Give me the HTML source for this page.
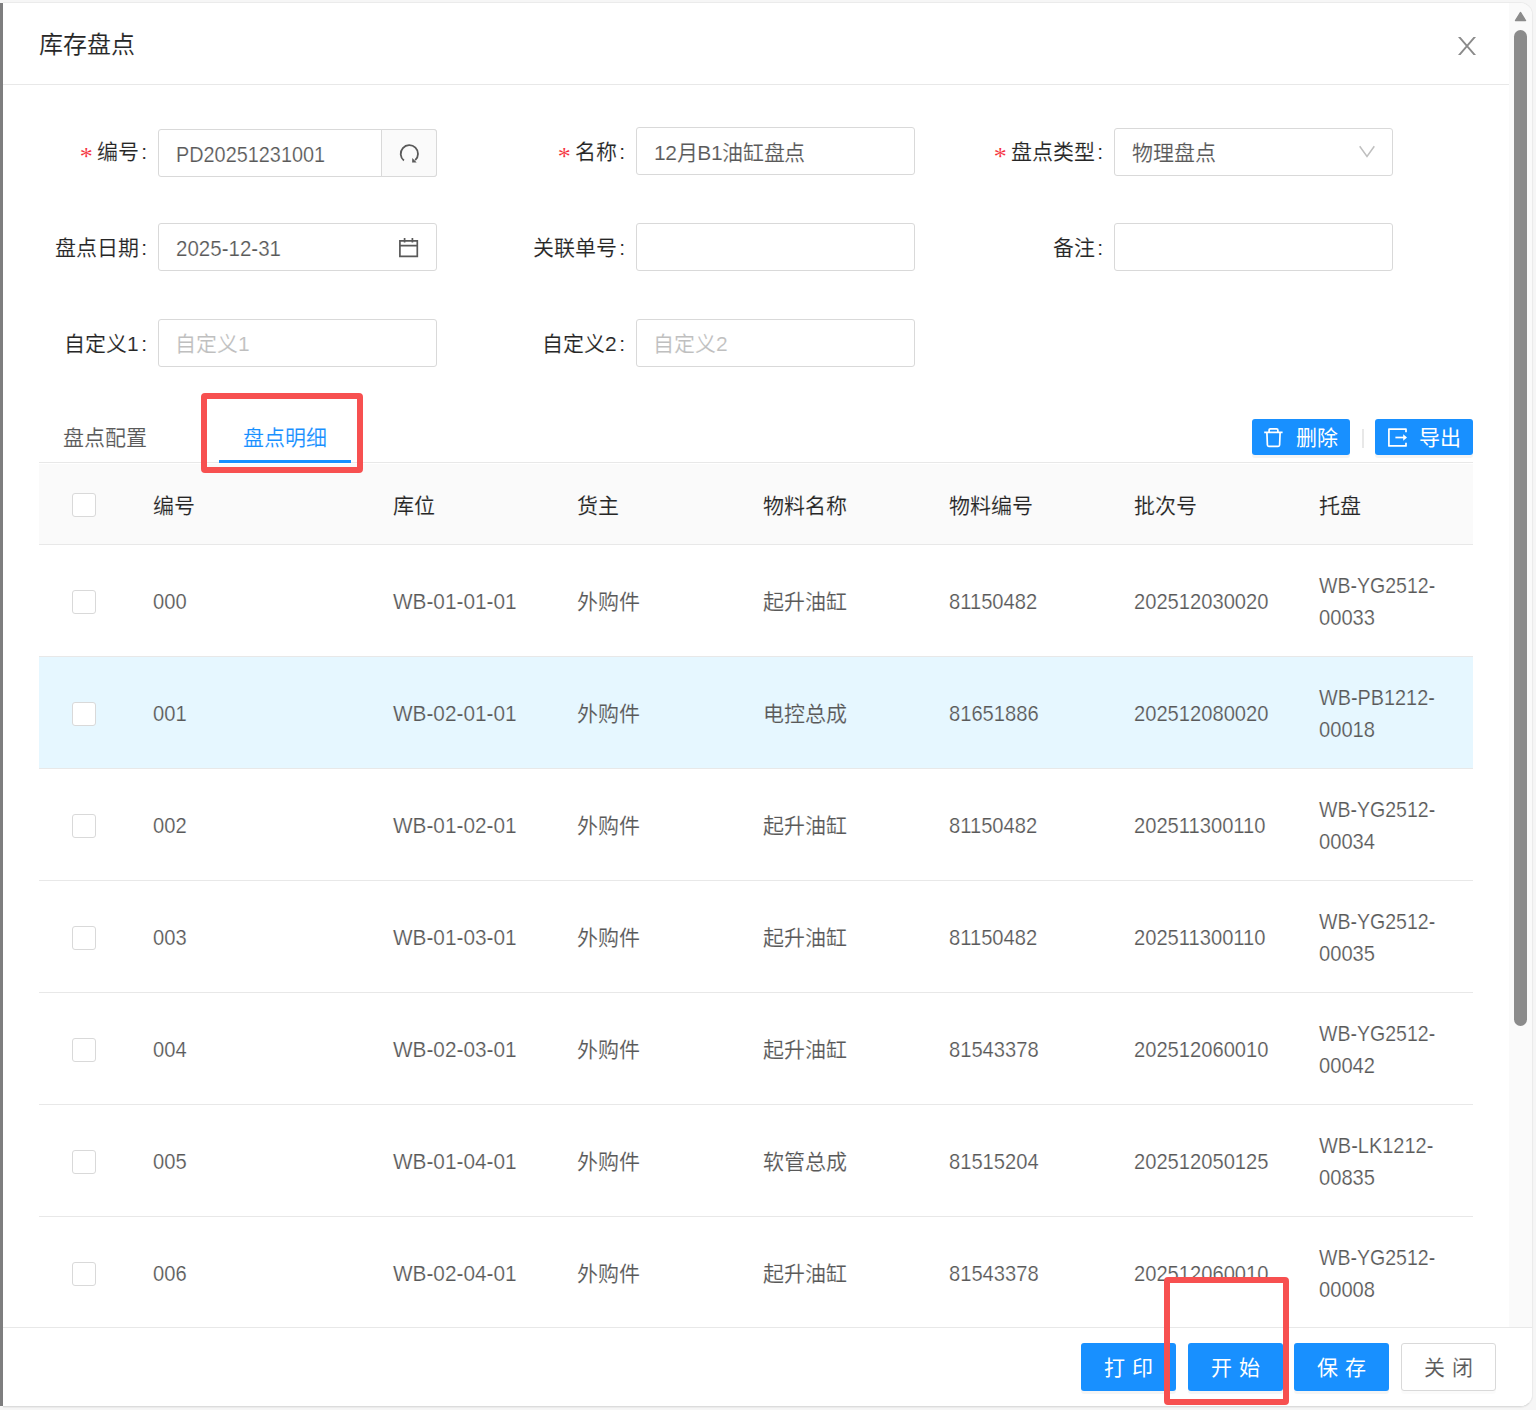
<!DOCTYPE html>
<html lang="zh-CN">
<head>
<meta charset="utf-8">
<title>库存盘点</title>
<style>
*{box-sizing:border-box;margin:0;padding:0}
html,body{width:1536px;height:1410px;overflow:hidden;background:#f6f6f6}
body{position:relative;font-family:"Liberation Sans",sans-serif;font-size:21px;line-height:31.5px;color:#595959;-webkit-text-stroke:.12px #fff}
.abs{position:absolute}
.strip{left:0;top:3px;width:3px;height:1403px;background:#7e7e7f}
.modal{left:3px;top:2px;width:1530px;height:1405px;background:#fff;border:1px solid #ebebeb;border-bottom-color:#dcdcdc;border-left:0;border-radius:0 13px 13px 0;box-shadow:0 1px 1px rgba(0,0,0,.05)}
.hline{background:#e8e8e8;height:1px}
.title{left:39px;top:28px;height:33px;line-height:33px;font-size:24px;color:#262626;white-space:nowrap}
.track{left:1509px;top:3px;width:23px;height:1324px;background:#fafafa;border-radius:0 12px 0 0}
.thumb{left:1514px;top:30px;width:13px;height:996px;border-radius:6.5px;background:#8b8b8b}
/* form */
.lbl{height:48px;line-height:50px;text-align:right;color:#262626;white-space:nowrap;width:150px}
.lbl i{font-style:normal;color:#f5222d;font-size:26px;line-height:1;margin-right:4px;font-family:"Liberation Serif",serif;position:relative;top:5.5px}
.lbl b{font-weight:normal;margin:0 11px 0 2.5px}
.inp{width:279px;height:48px;border:1px solid #d9d9d9;border-radius:3px;background:#fff;line-height:48px;padding-left:17px;white-space:nowrap;overflow:hidden}
.ph{color:#bfbfbf;padding-left:16px}
/* tabs */
.tab{top:421.5px;height:31.5px;line-height:31.5px;white-space:nowrap}
.sbtn{-webkit-text-stroke:0 #1890ff;top:419px;width:98px;height:36px;border-radius:3px;background:#1890ff;box-shadow:0 3px 0 rgba(0,0,0,.045);color:#fff;line-height:38px;white-space:nowrap}
/* table */
.th{-webkit-text-stroke-color:#fafafa;top:490px;height:31.5px;line-height:31.5px;color:#262626;white-space:nowrap}
.row{left:39px;width:1434px;height:112px;border-bottom:1px solid #e8e8e8}
.cb{left:33px;top:45px;width:24px;height:24px;border:1px solid #d9d9d9;border-radius:3px;background:#fff}
.c{top:40.5px;height:31.5px;line-height:31.5px;white-space:nowrap}
.c2{top:24.5px;line-height:31.5px;white-space:nowrap}
.n,.w,.y,.p,.d{font-size:22px;transform-origin:0 50%;display:inline-block;-webkit-text-stroke-width:.2px}
.inp .p,.inp .d{position:relative;top:1px}
.n{transform:scaleX(.916)}.w{transform:scaleX(.944)}.y{transform:scaleX(.888)}.p{transform:scaleX(.9025)}.d{transform:scaleX(.933)}
/* footer */
.btn{top:1343px;width:94.5px;height:48px;border-radius:3px;line-height:49px;text-align:center;white-space:nowrap;letter-spacing:7px;padding-left:7px;box-shadow:0 3px 0 rgba(0,0,0,.04)}
.pri{background:#1890ff;color:#fff;-webkit-text-stroke:0 #1890ff}
.dft{background:#fff;color:#595959;border:1px solid #d9d9d9;line-height:47px;box-shadow:0 3px 0 rgba(0,0,0,.015)}
.red{border:6px solid #f75050;border-radius:4px}
</style>
</head>
<body>
<div class="abs strip"></div>
<div class="abs modal"></div>

<!-- header -->
<div class="abs title">库存盘点</div>
<svg class="abs" style="left:1457px;top:36px" width="20" height="20" viewBox="0 0 20 20"><path d="M1 1 H3.5 L19 19 H16.5 Z M16.5 1 H19 L3.5 19 H1 Z" fill="#8a8a8a"/></svg>
<div class="abs hline" style="left:3px;top:84px;width:1506px"></div>

<!-- scrollbar -->
<div class="abs track"></div>
<svg class="abs" style="left:1514px;top:11px" width="14" height="11" viewBox="0 0 14 11"><path d="M1.4 9.6 L6.5 1.4 L11.6 9.6 Z" fill="#8b8b8b" stroke="#8b8b8b" stroke-width="1.2" stroke-linejoin="round"/></svg>
<div class="abs thumb"></div>

<!-- form row 1 -->
<div class="abs lbl" style="left:8px;top:127px"><i>*</i>编号<b>:</b></div>
<div class="abs inp" style="left:158px;top:129px"><span class="p">PD20251231001</span></div>
<div class="abs" style="left:381px;top:129px;width:56px;height:48px;background:#fafafa;border:1px solid #d9d9d9;border-radius:0 3px 3px 0"></div>
<svg class="abs" style="left:398px;top:142px" width="24" height="24" viewBox="0 0 24 24" fill="none" stroke="#595959" stroke-width="1.8"><path d="M5.91 18.57 A8.65 8.65 0 1 1 17.2 18.2"/><path d="M14.3 15.9 L14.1 20.6 L18.7 20.4 Z" fill="#595959" stroke="none"/></svg>

<div class="abs lbl" style="left:486px;top:127px"><i>*</i>名称<b>:</b></div>
<div class="abs inp" style="left:636px;top:127px;letter-spacing:-.35px;line-height:50px">12月B1油缸盘点</div>

<div class="abs lbl" style="left:964px;top:127px"><i>*</i>盘点类型<b>:</b></div>
<div class="abs inp" style="left:1114px;top:128px">物理盘点</div>
<svg class="abs" style="left:1358px;top:145px" width="18" height="14" viewBox="0 0 18 14" fill="none" stroke="#bfbfbf" stroke-width="1.5"><path d="M1.7 1.3 L9 11.4 L16.3 1.3"/></svg>

<!-- form row 2 -->
<div class="abs lbl" style="left:8px;top:223px">盘点日期<b>:</b></div>
<div class="abs inp" style="left:158px;top:223px"><span class="d">2025-12-31</span></div>
<svg class="abs" style="left:398px;top:237px" width="22" height="22" viewBox="0 0 22 22" fill="none" stroke="#595959" stroke-width="1.7"><path d="M1.9 3.8 H19.3 V19.4 H1.9 Z M1.9 8.6 H19.3 M6.6 1 V5.6 M14.4 1 V5.6"/></svg>

<div class="abs lbl" style="left:486px;top:223px">关联单号<b>:</b></div>
<div class="abs inp" style="left:636px;top:223px"></div>

<div class="abs lbl" style="left:964px;top:223px">备注<b>:</b></div>
<div class="abs inp" style="left:1114px;top:223px"></div>

<!-- form row 3 -->
<div class="abs lbl" style="left:8px;top:319px">自定义1<b>:</b></div>
<div class="abs inp ph" style="left:158px;top:319px">自定义1</div>

<div class="abs lbl" style="left:486px;top:319px">自定义2<b>:</b></div>
<div class="abs inp ph" style="left:636px;top:319px">自定义2</div>

<!-- tabs -->
<div class="abs tab" style="left:63px">盘点配置</div>
<div class="abs tab" style="left:243px;color:#1890ff">盘点明细</div>
<div class="abs hline" style="left:39px;top:462px;width:1434px"></div>
<div class="abs" style="left:219px;top:460px;width:132px;height:3px;background:#1890ff"></div>

<div class="abs sbtn" style="left:1252px"><span class="abs" style="left:44px;top:0">删除</span></div>
<svg class="abs" style="left:1263px;top:427px" width="21" height="21" viewBox="0 0 21 21" fill="none" stroke="#fff" stroke-width="1.7"><path d="M1.2 5.4 H19.6 M6.1 5.2 V3.2 Q6.1 1.9 7.4 1.9 H13.6 Q14.9 1.9 14.9 3.2 V5.2 M3.9 5.6 L4.4 18 Q4.5 19.3 5.8 19.3 H15.2 Q16.5 19.3 16.6 18 L17.1 5.6"/></svg>
<div class="abs" style="left:1362px;top:429px;width:1.5px;height:19px;background:#e8e8e8"></div>
<div class="abs sbtn" style="left:1375px"><span class="abs" style="left:44px;top:0">导出</span></div>
<svg class="abs" style="left:1387px;top:427px" width="21" height="21" viewBox="0 0 21 21" fill="none" stroke="#fff" stroke-width="1.7"><path d="M19 5.2 V2.1 H1.9 V18.9 H19 V15.8" stroke-linejoin="round"/><path d="M8.4 10.5 H18.4"/><path d="M16.2 7.3 L20 10.5 L16.2 13.7 Z" fill="#fff" stroke="none"/></svg>

<!--TBL0-->
<!-- table -->
<div class="abs" style="left:39px;top:463.5px;width:1434px;height:81px;background:#fafafa"></div>
<div class="abs hline" style="left:39px;top:544px;width:1434px"></div>
<div class="abs cb" style="left:72px;top:493px"></div>
<div class="abs th" style="left:152.5px">编号</div>
<div class="abs th" style="left:392.5px">库位</div>
<div class="abs th" style="left:577px">货主</div>
<div class="abs th" style="left:763px">物料名称</div>
<div class="abs th" style="left:948.5px">物料编号</div>
<div class="abs th" style="left:1133.5px">批次号</div>
<div class="abs th" style="left:1319px">托盘</div>
<div class="abs row" style="top:545px"><div class="abs cb"></div><div class="abs c n" style="left:113.5px">000</div><div class="abs c w" style="left:353.5px">WB-01-01-01</div><div class="abs c" style="left:538px">外购件</div><div class="abs c" style="left:724px">起升油缸</div><div class="abs c n" style="left:909.5px">81150482</div><div class="abs c n" style="left:1094.5px">202512030020</div><div class="abs c y" style="left:1280px;top:24.5px">WB-YG2512-</div><div class="abs c n" style="left:1280px;top:57px">00033</div></div>
<div class="abs row" style="top:657px;background:#e6f7ff;-webkit-text-stroke-color:#e6f7ff"><div class="abs cb"></div><div class="abs c n" style="left:113.5px">001</div><div class="abs c w" style="left:353.5px">WB-02-01-01</div><div class="abs c" style="left:538px">外购件</div><div class="abs c" style="left:724px">电控总成</div><div class="abs c n" style="left:909.5px">81651886</div><div class="abs c n" style="left:1094.5px">202512080020</div><div class="abs c y" style="left:1280px;top:24.5px;transform:scaleX(.902)">WB-PB1212-</div><div class="abs c n" style="left:1280px;top:57px">00018</div></div>
<div class="abs row" style="top:769px"><div class="abs cb"></div><div class="abs c n" style="left:113.5px">002</div><div class="abs c w" style="left:353.5px">WB-01-02-01</div><div class="abs c" style="left:538px">外购件</div><div class="abs c" style="left:724px">起升油缸</div><div class="abs c n" style="left:909.5px">81150482</div><div class="abs c n" style="left:1094.5px">202511300110</div><div class="abs c y" style="left:1280px;top:24.5px">WB-YG2512-</div><div class="abs c n" style="left:1280px;top:57px">00034</div></div>
<div class="abs row" style="top:881px"><div class="abs cb"></div><div class="abs c n" style="left:113.5px">003</div><div class="abs c w" style="left:353.5px">WB-01-03-01</div><div class="abs c" style="left:538px">外购件</div><div class="abs c" style="left:724px">起升油缸</div><div class="abs c n" style="left:909.5px">81150482</div><div class="abs c n" style="left:1094.5px">202511300110</div><div class="abs c y" style="left:1280px;top:24.5px">WB-YG2512-</div><div class="abs c n" style="left:1280px;top:57px">00035</div></div>
<div class="abs row" style="top:993px"><div class="abs cb"></div><div class="abs c n" style="left:113.5px">004</div><div class="abs c w" style="left:353.5px">WB-02-03-01</div><div class="abs c" style="left:538px">外购件</div><div class="abs c" style="left:724px">起升油缸</div><div class="abs c n" style="left:909.5px">81543378</div><div class="abs c n" style="left:1094.5px">202512060010</div><div class="abs c y" style="left:1280px;top:24.5px">WB-YG2512-</div><div class="abs c n" style="left:1280px;top:57px">00042</div></div>
<div class="abs row" style="top:1105px"><div class="abs cb"></div><div class="abs c n" style="left:113.5px">005</div><div class="abs c w" style="left:353.5px">WB-01-04-01</div><div class="abs c" style="left:538px">外购件</div><div class="abs c" style="left:724px">软管总成</div><div class="abs c n" style="left:909.5px">81515204</div><div class="abs c n" style="left:1094.5px">202512050125</div><div class="abs c y" style="left:1280px;top:24.5px;transform:scaleX(.908)">WB-LK1212-</div><div class="abs c n" style="left:1280px;top:57px">00835</div></div>
<div class="abs row" style="top:1217px"><div class="abs cb"></div><div class="abs c n" style="left:113.5px">006</div><div class="abs c w" style="left:353.5px">WB-02-04-01</div><div class="abs c" style="left:538px">外购件</div><div class="abs c" style="left:724px">起升油缸</div><div class="abs c n" style="left:909.5px">81543378</div><div class="abs c n" style="left:1094.5px">202512060010</div><div class="abs c y" style="left:1280px;top:24.5px">WB-YG2512-</div><div class="abs c n" style="left:1280px;top:57px">00008</div></div>
<!--TBL1-->

<!-- footer -->
<div class="abs" style="left:3px;top:1327px;width:1529px;height:79px;background:#fff;border-radius:0 0 12px 0"></div>
<div class="abs hline" style="left:3px;top:1327px;width:1529px"></div>
<div class="abs btn pri" style="left:1081px">打印</div>
<div class="abs btn pri" style="left:1188px">开始</div>
<div class="abs btn pri" style="left:1294px">保存</div>
<div class="abs btn dft" style="left:1401px">关闭</div>

<!-- annotations -->
<div class="abs red" style="left:201px;top:393px;width:162px;height:79.5px"></div>
<div class="abs red" style="left:1164px;top:1276.5px;width:125px;height:128.5px"></div>
</body>
</html>
